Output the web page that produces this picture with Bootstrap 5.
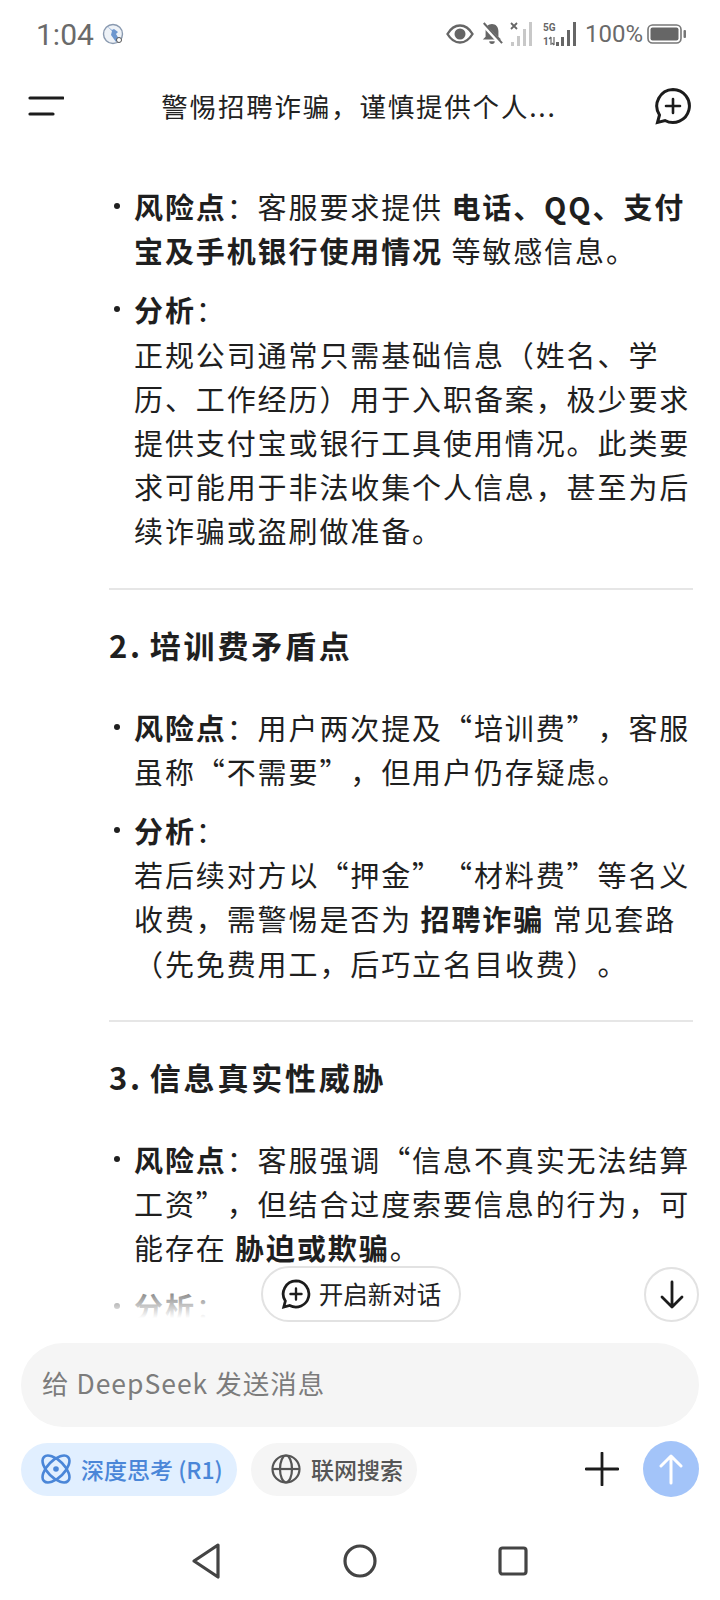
<!DOCTYPE html>
<html lang="zh-CN">
<head>
    <meta charset="UTF-8">
    <meta name="viewport" content="width=device-width, initial-scale=1.0">
    <title>DeepSeek</title>
    <link href="https://cdn.jsdelivr.net/npm/bootstrap@5.3.0/dist/css/bootstrap.min.css" rel="stylesheet">
    <style>
        body {
            width: 720px;
            height: 1600px;
            overflow: hidden;
            background: #fff;
            color: #1f1f1f;
            font-family: "Noto Sans CJK SC", "Noto Sans", sans-serif;
            text-spacing-trim: space-all;
        }

        .status-bar {
            height: 68px;
            padding: 0 33px 0 36px;
            color: #6a6a6a;
        }

        .status-time {
            font-family: Roboto, sans-serif;
            font-size: 30px;
        }

        .status-logo {
            margin-left: 8px;
        }

        .status-pct {
            font-family: Roboto, sans-serif;
            font-size: 24px;
            margin: 0 4px 0 8px;
        }

        .status-gap {
            margin-left: 11px;
        }

        .status-near {
            margin-left: 7px;
        }

        .top-bar {
            height: 76px;
            padding: 0 28px;
        }

        .top-title {
            font-size: 26.5px;
            letter-spacing: 1.8px;
            color: #222;
            white-space: nowrap;
        }

        .chat-area {
            height: 1199px;
            overflow: hidden;
            padding: 40px 27px 0 109px;
        }

        .reply-list {
            list-style: none;
            margin: 0 0 35px;
            padding: 0 0 0 25px;
        }

        .reply-list li {
            position: relative;
            font-size: 29px;
            line-height: 44.2px;
            letter-spacing: 1.9px;
            white-space: nowrap;
            margin-bottom: 15px;
        }

        .reply-list li::before {
            content: "";
            position: absolute;
            left: -20px;
            top: 19px;
            width: 6px;
            height: 6px;
            border-radius: 50%;
            background: #1f1f1f;
        }

        .reply-list b {
            font-weight: 700;
        }

        .reply-rule {
            margin: 0;
            border: 0;
            border-top: 2px solid #e6e6e6;
            opacity: 1;
        }

        .reply-head {
            font-size: 31px;
            font-weight: 700;
            letter-spacing: 2.8px;
            word-spacing: -3px;
            line-height: 44px;
            margin: 33px 0 38px;
        }

        .fade-box {
            position: absolute;
            left: 0;
            top: 1270px;
            width: 720px;
            height: 73px;
            background: linear-gradient(rgba(255,255,255,0), #fff 66%);
        }

        .new-chat {
            position: absolute;
            left: 261px;
            top: 1266px;
            width: 200px;
            height: 56px;
            background: #fff;
            border: 2px solid #e2e2e2;
            border-radius: 28px;
            font-size: 24.5px;
            color: #222;
        }

        .go-down {
            position: absolute;
            left: 644px;
            top: 1267px;
            width: 55px;
            height: 55px;
            background: #fff;
            border: 2px solid #e2e2e2;
            border-radius: 50%;
        }

        .composer {
            padding: 0 21px;
        }

        .msg-box {
            height: 84px;
            padding: 0 21px 4px;
            background: #f5f5f5;
            border-radius: 42px;
            font-size: 26.5px;
            color: #7c7c7c;
            letter-spacing: 1px;
        }

        .tool-row {
            margin-top: 15px;
            height: 54px;
        }

        .tool-pill {
            height: 53px;
            padding: 0 0 0 20px;
            gap: 10px;
            border-radius: 27px;
            font-size: 23px;
            font-weight: 500;
            white-space: nowrap;
        }

        .tool-blue {
            width: 216px;
            background: #e1efff;
            color: #4a86d8;
        }

        .tool-grey {
            width: 166px;
            margin-left: 14px;
            background: #f5f5f5;
            color: #555;
        }

        .plus-icon {
            margin-right: 24px;
        }

        .send-btn {
            width: 56px;
            height: 56px;
            border-radius: 50%;
            background: #a3c4f9;
        }

        .home-bar {
            height: 64px;
            margin-top: 33px;
            padding: 0 192px 0 190px;
        }
    </style>
</head>
<body class="position-relative">

<!-- status bar -->
<div class="status-bar d-flex align-items-center">
    <span class="status-time">1:04</span>
    <svg class="status-logo" width="22" height="22" viewBox="0 0 22 22">
        <circle cx="11" cy="11" r="9.5" fill="#eef2f7" stroke="#8a9ab0" stroke-width="1.4"/>
        <path d="M5 3l5 5-1 4 5 7 3-3-3-5 2-2-4-3-2 1z" fill="#6d97cf"/>
        <circle cx="17" cy="17" r="2.5" fill="#fff" stroke="#555" stroke-width="1"/>
    </svg>
    <div class="ms-auto d-flex align-items-center">
        <svg width="28" height="20" viewBox="0 0 28 20">
            <path d="M1.5 10C5 4 9 1.5 14 1.5S23 4 26.5 10C23 16 19 18.5 14 18.5S5 16 1.5 10z" fill="none" stroke="#666" stroke-width="2.4"/>
            <circle cx="14" cy="10" r="5.5" fill="#666"/>
        </svg>
        <svg class="status-near" width="22" height="26" viewBox="0 0 24 26">
            <path d="M12 2c-4 0-7 3-7 8v6l-3 3h20l-3-3v-6c0-5-3-8-7-8z" fill="#666"/>
            <path d="M9 21a3 3 0 0 0 6 0z" fill="#666"/>
            <path d="M2 2l20 22" stroke="#fff" stroke-width="4.5"/>
            <path d="M3 1l20 22" stroke="#666" stroke-width="2.2"/>
        </svg>
        <svg class="status-near" width="22" height="26" viewBox="0 0 22 26">
            <path d="M1 2l6 6M7 2L1 8" stroke="#666" stroke-width="1.8"/>
            <g fill="#c8c8c8"><rect x="1" y="21" width="3" height="4"/><rect x="7" y="15" width="3" height="10"/><rect x="13" y="8" width="3" height="17"/><rect x="19" y="1" width="3" height="24"/></g>
        </svg>
        <svg class="status-gap" width="34" height="26" viewBox="0 0 34 26">
            <text x="0" y="10" font-size="10" font-weight="700" font-family="Roboto" fill="#666">5G</text>
            <text x="0" y="24" font-size="10" font-weight="700" font-family="Roboto" fill="#666">1</text>
            <path d="M8 24v-8M6 18l2-2M11 16v8M9 22l2 2" stroke="#666" stroke-width="1.2" fill="none"/>
            <g fill="#666"><rect x="13" y="21" width="3" height="4"/><rect x="18" y="16" width="3" height="9"/><rect x="24" y="9" width="3" height="16"/><rect x="30" y="1" width="3" height="24"/></g>
        </svg>
        <span class="status-pct">100%</span>
        <svg width="40" height="20" viewBox="0 0 40 20">
            <rect x="1" y="1" width="33" height="18" rx="4.5" fill="none" stroke="#777" stroke-width="1.6"/>
            <rect x="3.5" y="3.5" width="28" height="13" rx="2" fill="#666"/>
            <rect x="36.5" y="6" width="2.5" height="8" rx="1" fill="#777"/>
        </svg>
    </div>
</div>

<!-- chat header -->
<div class="top-bar d-flex align-items-center justify-content-between">
    <svg width="36" height="24" viewBox="0 0 36 24">
        <path d="M2 4h33M2 20h23" stroke="#1c1c1c" stroke-width="3.2" stroke-linecap="round"/>
    </svg>
    <div class="top-title">警惕招聘诈骗，谨慎提供个人...</div>
    <svg width="38" height="38" viewBox="0 0 38 38">
        <path d="M19 2.5A16.5 16.5 0 1 1 11 33.5L3.5 35.5 5.5 28A16.5 16.5 0 0 1 19 2.5z" fill="none" stroke="#1c1c1c" stroke-width="3"/>
        <path d="M19 12v14M12 19h14" stroke="#1c1c1c" stroke-width="2.6" stroke-linecap="round"/>
    </svg>
</div>

<!-- reply text, scrolled part way -->
<div class="chat-area">
    <ul class="reply-list">
        <li><b>风险点</b>：客服要求提供 <b>电话、QQ、支付<br>宝及手机银行使用情况</b> 等敏感信息。</li>
        <li><b>分析</b>：<br>正规公司通常只需基础信息（姓名、学<br>历、工作经历）用于入职备案，极少要求<br>提供支付宝或银行工具使用情况。此类要<br>求可能用于非法收集个人信息，甚至为后<br>续诈骗或盗刷做准备。</li>
    </ul>
    <hr class="reply-rule">
    <div class="reply-head">2. 培训费矛盾点</div>
    <ul class="reply-list">
        <li><b>风险点</b>：用户两次提及“培训费”，客服<br>虽称“不需要”，但用户仍存疑虑。</li>
        <li><b>分析</b>：<br>若后续对方以“押金”“材料费”等名义<br>收费，需警惕是否为 <b>招聘诈骗</b> 常见套路<br>（先免费用工，后巧立名目收费）。</li>
    </ul>
    <hr class="reply-rule">
    <div class="reply-head">3. 信息真实性威胁</div>
    <ul class="reply-list">
        <li><b>风险点</b>：客服强调“信息不真实无法结算<br>工资”，但结合过度索要信息的行为，可<br>能存在 <b>胁迫或欺骗</b>。</li>
        <li><b>分析</b>：</li>
    </ul>
</div>

<!-- floats over the reply -->
<div class="fade-box"></div>
<div class="new-chat d-flex align-items-center justify-content-center gap-2">
    <svg width="30" height="30" viewBox="0 0 38 38">
        <path d="M19 2.5A16.5 16.5 0 1 1 11 33.5L3.5 35.5 5.5 28A16.5 16.5 0 0 1 19 2.5z" fill="none" stroke="#1c1c1c" stroke-width="3.5"/>
        <path d="M19 12v14M12 19h14" stroke="#1c1c1c" stroke-width="3" stroke-linecap="round"/>
    </svg>
    <span>开启新对话</span>
</div>
<div class="go-down d-flex align-items-center justify-content-center">
    <svg width="26" height="30" viewBox="0 0 26 30">
        <path d="M13 2v25M3 17l10 10 10-10" fill="none" stroke="#1c1c1c" stroke-width="2.8" stroke-linecap="round" stroke-linejoin="round"/>
    </svg>
</div>

<!-- composer -->
<div class="composer">
    <div class="msg-box d-flex align-items-center">给 DeepSeek 发送消息</div>
    <div class="tool-row d-flex align-items-center">
        <div class="tool-pill tool-blue d-flex align-items-center">
            <svg class="flex-shrink-0" width="30" height="30" viewBox="0 0 30 30">
                <g fill="none" stroke="#4a86d8" stroke-width="2.6">
                    <ellipse cx="15" cy="15" rx="8.5" ry="17" transform="rotate(45 15 15)"/>
                    <ellipse cx="15" cy="15" rx="8.5" ry="17" transform="rotate(-45 15 15)"/>
                </g>
                <circle cx="15" cy="15" r="2.8" fill="#4a86d8"/>
            </svg>
            <span>深度思考 (R1)</span>
        </div>
        <div class="tool-pill tool-grey d-flex align-items-center">
            <svg class="flex-shrink-0" width="30" height="30" viewBox="0 0 30 30">
                <g fill="none" stroke="#555" stroke-width="2.2">
                    <circle cx="15" cy="15" r="13.5"/>
                    <ellipse cx="15" cy="15" rx="6" ry="13.5"/>
                    <path d="M2 15h26"/>
                </g>
            </svg>
            <span>联网搜索</span>
        </div>
        <svg class="ms-auto plus-icon" width="34" height="34" viewBox="0 0 34 34">
            <path d="M17 1v32M1 17h32" stroke="#1c1c1c" stroke-width="2.8" stroke-linecap="round"/>
        </svg>
        <div class="send-btn d-flex align-items-center justify-content-center">
            <svg width="24" height="32" viewBox="0 0 24 32">
                <path d="M12 30V3M2 13L12 3l10 10" fill="none" stroke="#fff" stroke-width="3" stroke-linecap="round" stroke-linejoin="round"/>
            </svg>
        </div>
    </div>
</div>

<!-- android nav -->
<div class="home-bar d-flex align-items-center justify-content-between">
    <svg width="32" height="38" viewBox="0 0 32 38">
        <path d="M28 3L4 19l24 16z" fill="none" stroke="#444" stroke-width="3.2" stroke-linejoin="round"/>
    </svg>
    <svg width="34" height="34" viewBox="0 0 34 34">
        <circle cx="17" cy="17" r="15" fill="none" stroke="#444" stroke-width="3.2"/>
    </svg>
    <svg width="30" height="30" viewBox="0 0 30 30">
        <rect x="2" y="2" width="26" height="26" rx="2.5" fill="none" stroke="#444" stroke-width="3.2"/>
    </svg>
</div>

<script src="https://cdn.jsdelivr.net/npm/bootstrap@5.3.0/dist/js/bootstrap.bundle.min.js"></script>
</body>
</html>
